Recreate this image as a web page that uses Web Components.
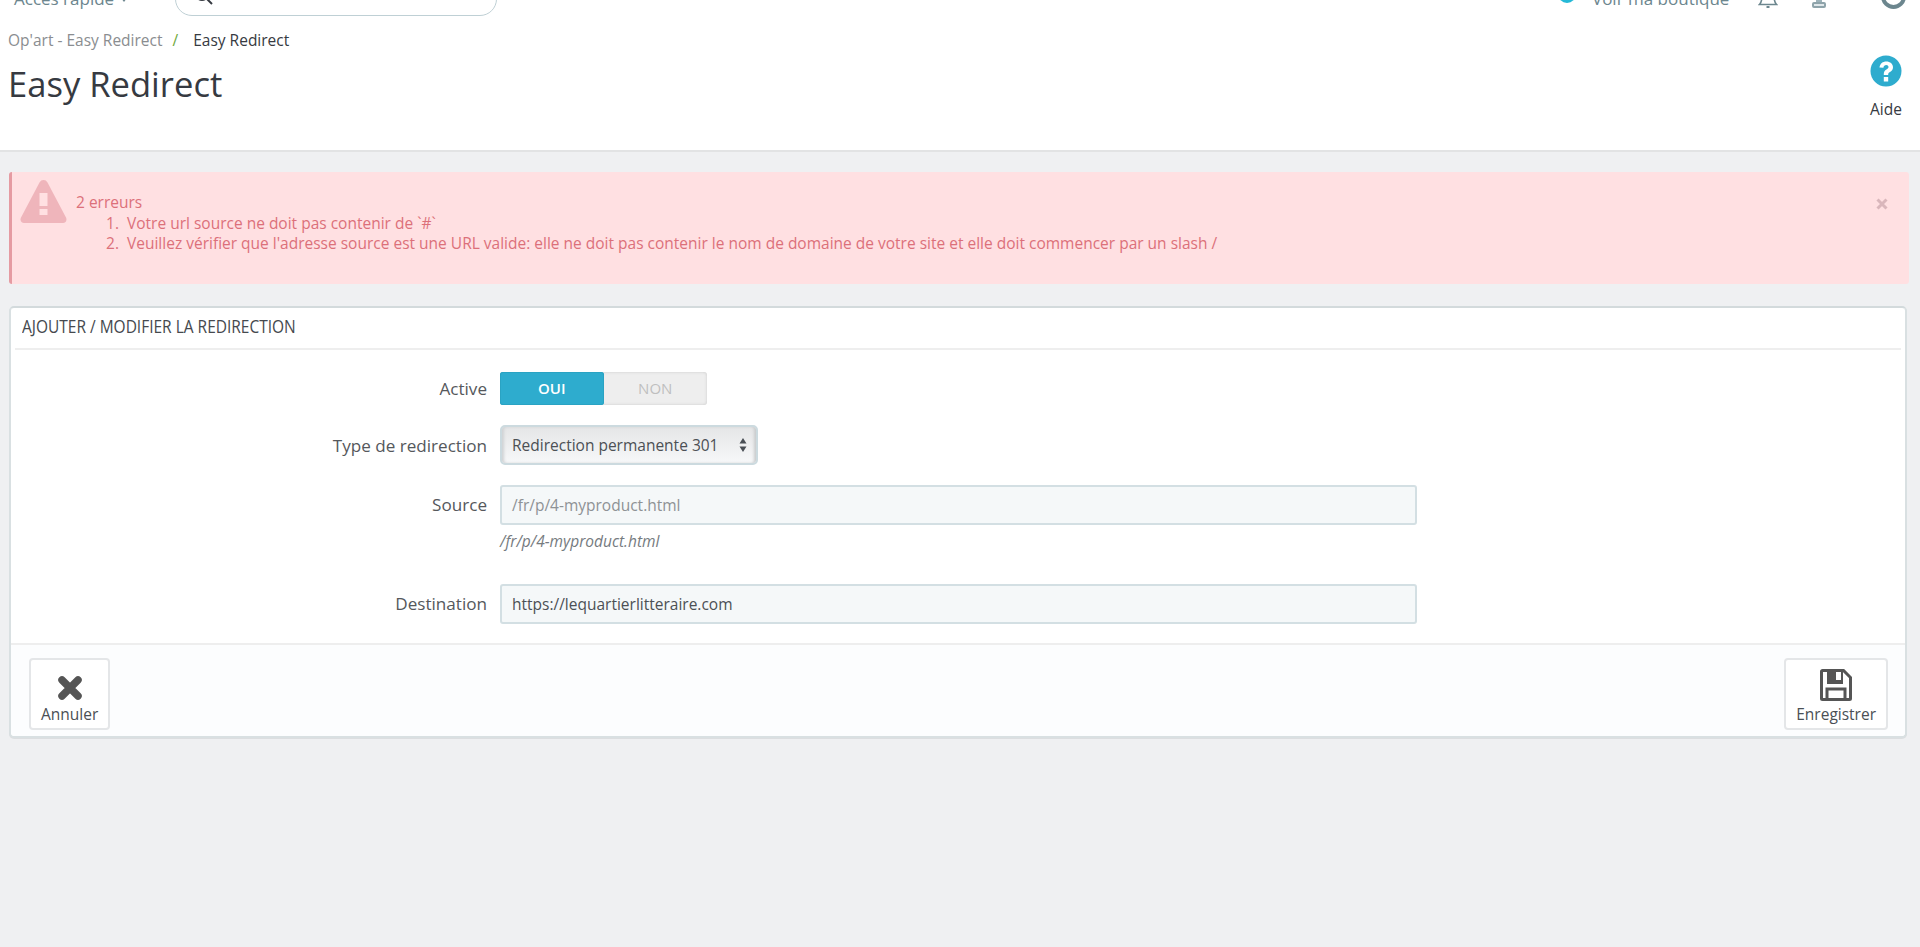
<!DOCTYPE html>
<html>
<head>
<meta charset="utf-8">
<title>Easy Redirect</title>
<style>
  html, body { margin: 0; height: 100%; }
  body { background: #eff0f2; font-family: "Open Sans", "Liberation Sans", sans-serif; color: #4a4f55; overflow: hidden; }
</style>
</head>
<body>

<!-- top of the page, scrolled a bit so the nav is cut off -->
<ps-topbar></ps-topbar>
<ps-page-head crumb="Op'art - Easy Redirect" current="Easy Redirect" heading="Easy Redirect"></ps-page-head>

<ps-main>
  <ps-alert>
    <span slot="title">2 erreurs</span>
    <li>Votre url source ne doit pas contenir de `#`</li>
    <li>Veuillez vérifier que l'adresse source est une URL valide: elle ne doit pas contenir le nom de domaine de votre site et elle doit commencer par un slash /</li>
  </ps-alert>

  <ps-panel heading="Ajouter / modifier la redirection">
    <ps-row label="Active" class="r-active"><ps-switch></ps-switch></ps-row>
    <ps-row label="Type de redirection" class="r-type"><ps-select>Redirection permanente 301</ps-select></ps-row>
    <ps-row label="Source" class="r-source" help="/fr/p/4-myproduct.html"><ps-input placeholder>/fr/p/4-myproduct.html</ps-input></ps-row>
    <ps-row label="Destination" class="r-dest"><ps-input>https://lequartierlitteraire.com</ps-input></ps-row>

    <ps-tool-button slot="footer" icon="cross">Annuler</ps-tool-button>
    <ps-tool-button slot="footer" icon="save">Enregistrer</ps-tool-button>
  </ps-panel>
</ps-main>

<script>
function shadow(el, html) {
  el.attachShadow({mode: 'open'}).innerHTML = html;
}

class PsTopbar extends HTMLElement {
  connectedCallback() {
    shadow(this, `
    <style>
      :host { display: block; height: 20px; background: #fff; overflow: hidden; }
      .bar { display: flex; align-items: flex-end; height: 50px; margin-top: -30px; color: #6c868e; font-size: 17px; }
      .quick { margin-left: 14px; width: 161px; line-height: 20px; white-space: nowrap; margin-bottom: 11px; }
      .quick i { display: inline-block; margin-left: 7px; width: 0; height: 0; border: 3px solid transparent; border-top: 4px solid #6c868e; border-bottom: 0; vertical-align: 3px; }
      .search { width: 322px; height: 36px; box-sizing: border-box; margin-bottom: 4px; border: 1px solid #bfd0d5; border-radius: 17px; display: flex; align-items: flex-end; padding: 0 0 9px 18px; }
      .search svg { display: block; }
      .right { margin-left: auto; display: flex; align-items: flex-end; }
      .shop-dot { width: 18px; height: 18px; border-radius: 50%; background: #25b9d7; margin-bottom: 17px; }
      .shop { margin-left: 16px; white-space: nowrap; line-height: 20px; margin-bottom: 11px; width: 166px; }
      .bell { margin-bottom: 12px; }
      .stamp { margin-left: 34px; margin-bottom: 12px; }
      .ring { margin-left: 55px; margin-right: 14px; margin-bottom: 11px; width: 25px; height: 25px; box-sizing: border-box; border: 4px solid #6c868e; border-radius: 50%; }
    </style>
    <div class="bar">
      <div class="quick">Accès rapide<i></i></div>
      <div class="search">
        <svg width="20" height="20" viewBox="0 0 20 20" fill="none" stroke="#363a41" stroke-width="2"><circle cx="8" cy="8" r="6"/><path d="M12.500 12.500l5.500 5.500"/></svg>
      </div>
      <div class="right">
        <div class="shop-dot"></div>
        <div class="shop">Voir ma boutique</div>
        <svg class="bell" width="20" height="16" viewBox="0 0 20 16" fill="none" stroke="#6c868e" stroke-width="1.600"><path d="M4 0c0 6-1 8-2.500 9.500h17C17 8 16 6 16 0" transform="translate(0 3)"/><path d="M8.500 15h3" stroke-width="2"/></svg>
        <svg class="stamp" width="14" height="16" viewBox="0 0 14 16"><rect x="4" y="0" width="6" height="10" fill="#9db2b9"/><rect x="1" y="11" width="12" height="4" rx="1" fill="#dfe7ea" stroke="#8ea3aa" stroke-width="2"/></svg>
        <div class="ring"></div>
      </div>
    </div>`);
  }
}
customElements.define('ps-topbar', PsTopbar);

class PsPageHead extends HTMLElement {
  connectedCallback() {
    shadow(this, `
    <style>
      :host { display: flex; justify-content: space-between; height: 132px; box-sizing: border-box; background: #fff; border-bottom: 2px solid #e2e3e4; padding: 0 18px 0 8px; }
      .crumb { margin-top: 10px; font-size: 15.500px; line-height: 21px; white-space: nowrap; color: #363a41; }
      .crumb a { color: #8a8d90; }
      .crumb em { font-style: normal; color: #6fa83c; margin: 0 15px 0 10px; }
      h1 { margin: 8px 0 0 0; font-weight: 400; font-size: 34.600px; line-height: 50px; color: #363a41; }
      .help { display: flex; flex-direction: column; align-items: center; margin-top: 35px; font-size: 15.500px; line-height: 21px; color: #363a41; }
      .help svg { display: block; margin-bottom: 12px; }
    </style>
    <div>
      <div class="crumb"><a>${this.getAttribute('crumb')}</a><em>/</em>${this.getAttribute('current')}</div>
      <h1>${this.getAttribute('heading')}</h1>
    </div>
    <div class="help">
      <svg width="32" height="32" viewBox="0 0 32 32"><circle cx="16" cy="16" r="15.500" fill="#2eacce"/><path d="M9.500 12.500C10 8.500 12.800 6.500 16.300 6.500c3.800 0 6.700 2.400 6.700 5.700 0 2.600-1.500 3.800-3 4.800-1.300.8-1.800 1.300-1.800 2.500v.5h-4.400v-1c0-2.300 1-3.500 2.600-4.500 1.300-.8 2.100-1.400 2.100-2.500 0-1.200-1-2-2.300-2-1.500 0-2.500 1-2.800 2.700z" fill="#fff"/><rect x="13.800" y="22" width="4.400" height="4.500" fill="#fff"/></svg>
      Aide
    </div>`);
  }
}
customElements.define('ps-page-head', PsPageHead);

class PsMain extends HTMLElement {
  connectedCallback() {
    shadow(this, `
    <style>
      :host { display: flex; flex-direction: column; gap: 22px; padding: 20px 11px 0 9px; }
    </style>
    <slot></slot>`);
  }
}
customElements.define('ps-main', PsMain);

class PsAlert extends HTMLElement {
  connectedCallback() {
    shadow(this, `
    <style>
      :host { display: flex; height: 112px; box-sizing: border-box; background: #ffe0e2; border-left: 3px solid #e59ba2; border-radius: 3px; color: #dc707a; font-size: 15.500px; line-height: 20.700px; padding: 20px 0 0 8px; position: relative; }
      .ico { display: block; margin: -12px 9px 0 0; flex: none; }
      ol { margin: 0; padding-left: 47px; }
      ::slotted(li) { padding-left: 4px; }
      .close { position: absolute; right: 21px; top: 26px; }
    </style>
    <svg class="ico" width="47" height="43" viewBox="0 0 47 43"><path d="M23.500 0c1.800 0 3 .8 4 2.500l18.500 35c1.300 2.800-.3 5.500-3 5.500H4c-2.700 0-4.300-2.700-3-5.500L19.500 2.500c1-1.700 2.200-2.500 4-2.500z" fill="#efb5bb"/><rect x="19.500" y="13" width="8" height="13" fill="#ffe0e2"/><rect x="19.500" y="29" width="8" height="6" fill="#ffe0e2"/></svg>
    <div>
      <slot name="title"></slot>
      <ol><slot></slot></ol>
    </div>
    <svg class="close" width="12" height="12" viewBox="0 0 12 12"><path d="M1.500 1.500l9 9M10.500 1.500l-9 9" stroke="#d9b6bb" stroke-width="3"/></svg>`);
  }
}
customElements.define('ps-alert', PsAlert);

class PsPanel extends HTMLElement {
  connectedCallback() {
    shadow(this, `
    <style>
      :host { display: block; height: 432px; margin-right: 2px; box-sizing: border-box; background: #fff; border: 2px solid #d9e0e2; border-radius: 5px; border-top-color: #d3dadc; box-shadow: 0 1px 0 #dcdee0; }
      header { margin: 0 4px; height: 40px; padding-left: 7px; border-bottom: 2px solid #eeeeee; line-height: 37px; color: #45494e; white-space: nowrap; overflow: hidden; }
      /* no condensed font installed, so squeeze the title */
      header span { display: inline-block; font-size: 18px; font-weight: 400; text-transform: uppercase; transform: scaleX(.86); transform-origin: 0 50%; }
      .body { height: 293px; box-sizing: border-box; padding-top: 22px; display: flex; flex-direction: column; }
      footer { height: 93px; box-sizing: border-box; background: #fcfdfe; border-top: 2px solid #eeeeee; border-radius: 0 0 4px 4px; padding: 13px 17px 0 18px; display: flex; justify-content: space-between; align-items: flex-start; }
    </style>
    <header><span>${this.getAttribute('heading')}</span></header>
    <div class="body"><slot></slot></div>
    <footer><slot name="footer"></slot></footer>`);
  }
}
customElements.define('ps-panel', PsPanel);

class PsRow extends HTMLElement {
  connectedCallback() {
    const help = this.getAttribute('help');
    shadow(this, `
    <style>
      :host { display: grid; grid-template-columns: 476px 1fr; column-gap: 13px; margin-bottom: 20px; }
      :host(.r-source) { margin-bottom: 33px; }
      label { text-align: right; font-size: 17.100px; line-height: 20px; color: #55585c; align-self: start; padding-top: 10px; white-space: nowrap; }
      :host(.r-active) label { padding-top: 7px; }
      :host(.r-type) label { padding-top: 11px; }
      .help { grid-column: 2; margin-top: 6px; font-size: 15.500px; line-height: 20px; font-style: italic; color: #767b80; }
    </style>
    <label>${this.getAttribute('label')}</label>
    <div><slot></slot></div>
    ${help ? `<div class="help">${help}</div>` : ''}`);
  }
}
customElements.define('ps-row', PsRow);

class PsSwitch extends HTMLElement {
  connectedCallback() {
    shadow(this, `
    <style>
      :host { display: flex; width: 207px; height: 33px; border-radius: 3px; background: #eeeeee; box-shadow: inset 0 0 3px #c9c9c9; font-size: 15px; line-height: 33px; text-align: center; }
      span { flex: 1; }
      .on { background: #2eacce; border-radius: 3px; color: #fff; font-weight: 600; box-shadow: inset 0 0 0 1px #2aa3c3; }
      .off { color: #bfbfbf; }
    </style>
    <span class="on">OUI</span><span class="off">NON</span>`);
  }
}
customElements.define('ps-switch', PsSwitch);

class PsSelect extends HTMLElement {
  connectedCallback() {
    shadow(this, `
    <style>
      :host { display: flex; align-items: center; justify-content: space-between; box-sizing: border-box; width: 258px; height: 40px; padding: 0 9px 1px 10px; border: 2px solid #ccdadf; border-radius: 5px; background: linear-gradient(#e5e6e7, #f7f8f9); box-shadow: inset 3px 0 3px -1px #d0d2d4, inset -3px 0 3px -1px #c9cbcd; font-size: 15.500px; color: #4c5055; white-space: nowrap; }
      svg { display: block; }
    </style>
    <slot></slot>
    <svg width="8" height="14" viewBox="0 0 8 14"><path d="M4 0l3.500 5.500h-7zM4 14L.5 8.500h7z" fill="#4a4f55"/></svg>`);
  }
}
customElements.define('ps-select', PsSelect);

class PsInput extends HTMLElement {
  connectedCallback() {
    shadow(this, `
    <style>
      :host { display: flex; align-items: center; box-sizing: border-box; width: 917px; height: 40px; padding: 0 0 1px 10px; border: 2px solid #d3dfe3; border-radius: 3px; background: #f5f8f9; font-size: 15.500px; color: #4c5055; white-space: nowrap; }
      :host([placeholder]) { color: #8e9295; }
    </style>
    <slot></slot>`);
  }
}
customElements.define('ps-input', PsInput);

const TOOL_ICONS = {
  cross: `<svg width="26" height="26" viewBox="0 0 26 26"><path d="M5 5l16 16M21 5L5 21" stroke="#555" stroke-width="7.500" stroke-linecap="round"/></svg>`,
  save: `<svg width="32" height="32" viewBox="0 0 32 32" fill="none"><path d="M2.500 1.500h21l7 7v21a1 1 0 0 1-1 1h-27a1 1 0 0 1-1-1v-27a1 1 0 0 1 1-1z" stroke="#555" stroke-width="3"/><path d="M7 2h16v13H7z" fill="#555"/><rect x="16" y="3" width="5" height="8" fill="#fcfdfe"/><path d="M7 30V20h18v10" stroke="#555" stroke-width="3"/></svg>`
};

class PsToolButton extends HTMLElement {
  connectedCallback() {
    shadow(this, `
    <style>
      :host { display: flex; flex-direction: column; align-items: center; box-sizing: border-box; height: 72px; padding: 0 10px; background: #fff; border: 2px solid #e4e6e8; border-radius: 4px; font-size: 15.500px; color: #4a4f55; white-space: nowrap; }
      .ico { height: 41px; display: flex; align-items: flex-end; }
      .ico svg { display: block; }
      span { line-height: 21px; margin-top: 3px; }
    </style>
    <div class="ico">${TOOL_ICONS[this.getAttribute('icon')]}</div>
    <span><slot></slot></span>`);
  }
}
customElements.define('ps-tool-button', PsToolButton);
</script>

</body>
</html>
